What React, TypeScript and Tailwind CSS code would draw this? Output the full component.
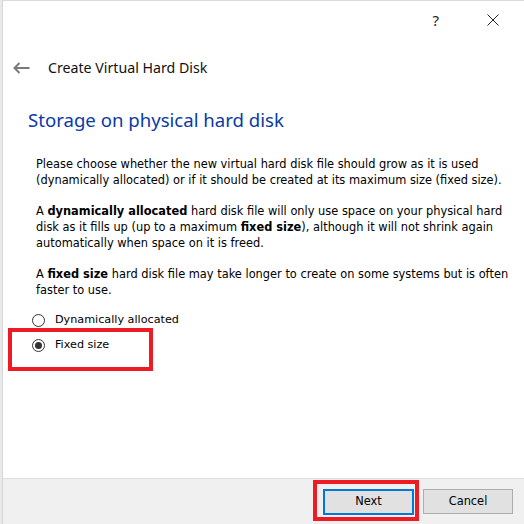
import React from "react";

const body = { fontFamily: '"DejaVu Sans", Tahoma, sans-serif' };
const ui = { fontFamily: '"Noto Sans", "Open Sans", sans-serif' };

function Radio({ checked, label }: { checked?: boolean; label: string }) {
  return (
    <div className="flex items-center h-[20px]">
      <span className="w-[13px] h-[13px] rounded-full border border-[#333333] bg-white flex items-center justify-center">
        {checked && <span className="w-[7px] h-[7px] rounded-full bg-[#333333]" />}
      </span>
      <span className="ml-[10px] text-[11.2px] text-black" style={body}>
        {label}
      </span>
    </div>
  );
}

export default function App() {
  return (
    <div className="w-[524px] h-[524px] flex bg-white overflow-hidden">
      <div className="w-[3px] h-full bg-[#e9e9e9] border-r border-[#d6d6d6]" />
      <div className="flex-1 flex flex-col border-t border-[#dcdcdc]">
        <div className="h-[38px] flex items-center justify-end">
          <span className="text-[15px] text-[#222] mr-[48px]" style={ui}>?</span>
          <svg width="12" height="12" viewBox="0 0 12 12" className="mr-[25px]">
            <path d="M0.5 0.5 L11.5 11.5 M11.5 0.5 L0.5 11.5" stroke="#222" strokeWidth="1" />
          </svg>
        </div>
        <div className="h-[58px] flex items-center">
          <svg width="17" height="12" viewBox="0 0 17 12" className="ml-[10px]">
            <path d="M1.5 6 H16.5 M6.5 1 L1.5 6 L6.5 11" stroke="#7a7a7a" strokeWidth="2" fill="none" />
          </svg>
          <span className="ml-[18px] text-[14.2px] text-[#111]" style={ui}>
            Create Virtual Hard Disk
          </span>
        </div>
        <div className="relative flex-1 flex flex-col">
          <div className="mt-[9px] ml-[25px] h-[28px] leading-[28px] text-[18.6px] text-[#0a3aa6]" style={ui}>
            Storage on physical hard disk
          </div>
          <div className="ml-[33px] mt-[22px] text-[11.4px] leading-[16px] text-black" style={body}>
            <p className="mb-[15px]">
              Please choose whether the new virtual hard disk file should grow as it is used
              <br />
              (dynamically allocated) or if it should be created at its maximum size (fixed size).
            </p>
            <p className="mb-[15px]">
              A <b>dynamically allocated</b> hard disk file will only use space on your physical hard
              <br />
              disk as it fills up (up to a maximum <b>fixed size</b>), although it will not shrink again
              <br />
              automatically when space on it is freed.
            </p>
            <p>
              A <b>fixed size</b> hard disk file may take longer to create on some systems but is often
              <br />
              faster to use.
            </p>
          </div>
          <div className="ml-[29px] mt-[12px] flex flex-col gap-[5px]">
            <Radio label="Dynamically allocated" />
            <Radio checked label="Fixed size" />
          </div>
          <div className="absolute left-[5px] top-[231px] w-[145px] h-[43px] border-[4px] border-[#ed1c24]" />
        </div>
        <div className="relative h-[46px] bg-[#f0f0f0] border-t border-[#dfdfdf] flex items-center justify-end pr-[11px] gap-[9px]">
          <button className="w-[91px] h-[26px] bg-[#e1e1e1] border-2 border-[#0078d7] text-[11.4px] text-black" style={body}>
            Next
          </button>
          <button className="w-[90px] h-[25px] bg-[#e1e1e1] border border-[#adadad] text-[11.4px] text-black" style={body}>
            Cancel
          </button>
          <div className="absolute left-[310px] top-[1px] w-[106px] h-[41px] border-[4px] border-[#ed1c24]" />
        </div>
      </div>
    </div>
  );
}
